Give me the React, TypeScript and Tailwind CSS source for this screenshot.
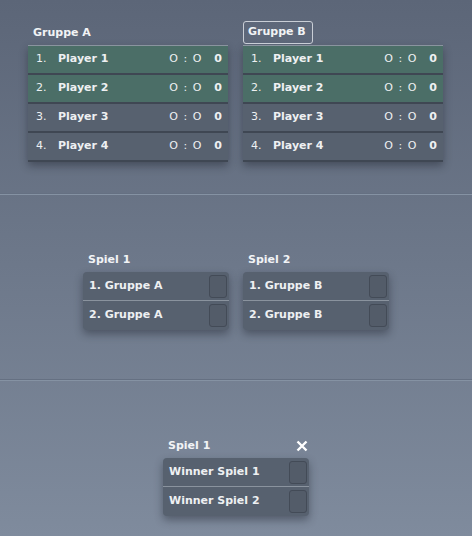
const font = { fontFamily: '"DejaVu Sans", "Liberation Sans", sans-serif' };

const players = ["Player 1", "Player 2", "Player 3", "Player 4"];

const GroupTable = ({ name, boxed }: { name: string; boxed?: boolean }) => (
  <div className="w-[200px]">
    <div className="h-[24px] flex items-center">
      {boxed ? (
        <div className="h-[23px] w-[70px] border border-[#c9ced6] rounded-[3px] flex items-center pl-[4px] text-[11px] font-bold text-[#f1f3f5]">
          {name}
        </div>
      ) : (
        <div className="pl-[5px] pt-[2px] text-[11px] font-bold text-[#f1f3f5]">{name}</div>
      )}
    </div>
    <div className="mt-[1px] shadow-[0_4px_8px_rgba(30,36,46,0.45)] border-t border-[#8a949f]">
      {players.map((p, i) => (
        <div
          key={p}
          className={`h-[29px] flex items-center pl-[8px] pr-[6px] text-[11px] text-[#eef0f2] border-b-2 border-[#3f4753] ${
            i < 2 ? "bg-[#4b6e67]" : "bg-[#57616f]"
          }`}
        >
          <span className="w-[22px]">{i + 1}.</span>
          <span className="flex-1 font-bold">{p}</span>
          <span className="w-[45px] tracking-[1px]">O : O</span>
          <span className="font-bold">0</span>
        </div>
      ))}
    </div>
  </div>
);

const SlotCard = ({ title, rows, close }: { title: string; rows: string[]; close?: boolean }) => (
  <div className="w-[146px]">
    <div className="h-[24px] flex items-center justify-between pl-[5px] pr-[1px]">
      <span className="text-[11px] font-bold text-[#f1f3f5]">{title}</span>
      {close && (
        <svg width="12" height="12" viewBox="0 0 12 12">
          <path d="M1.5 1.5 L10.5 10.5 M10.5 1.5 L1.5 10.5" stroke="#ffffff" strokeWidth="2.4" />
        </svg>
      )}
    </div>
    <div className="rounded-[4px] bg-[#57616f] shadow-[0_4px_8px_rgba(30,36,46,0.45)] overflow-hidden">
      {rows.map((r, i) => (
        <div
          key={r}
          className={`h-[29px] flex items-center pl-[6px] pr-[2px] text-[11px] font-bold text-[#eef0f2] ${
            i === 0 ? "border-b border-[#8a939e]" : ""
          }`}
        >
          <span className="flex-1">{r}</span>
          <div className="w-[18px] h-[23px] rounded-[3px] border border-[#434b57] bg-[#535c69]" />
        </div>
      ))}
    </div>
  </div>
);

const Divider = () => (
  <div className="h-[2px] w-full">
    <div className="h-px bg-[#657082]" />
    <div className="h-px bg-[#8592a3]" />
  </div>
);

export default function App() {
  return (
    <div
      className="w-[472px] h-[536px] overflow-hidden flex flex-col bg-gradient-to-b from-[#5c6678] to-[#7f8b9d]"
      style={font}
    >
      <div className="h-[193px] pt-[20px] pl-[28px] flex gap-[15px]">
        <GroupTable name="Gruppe A" />
        <GroupTable name="Gruppe B" boxed />
      </div>
      <Divider />
      <div className="h-[184px] pt-[53px] flex justify-center gap-[14px]">
        <SlotCard title="Spiel 1" rows={["1. Gruppe A", "2. Gruppe A"]} />
        <SlotCard title="Spiel 2" rows={["1. Gruppe B", "2. Gruppe B"]} />
      </div>
      <Divider />
      <div className="pt-[53px] flex justify-center">
        <SlotCard title="Spiel 1" rows={["Winner Spiel 1", "Winner Spiel 2"]} close />
      </div>
    </div>
  );
}
